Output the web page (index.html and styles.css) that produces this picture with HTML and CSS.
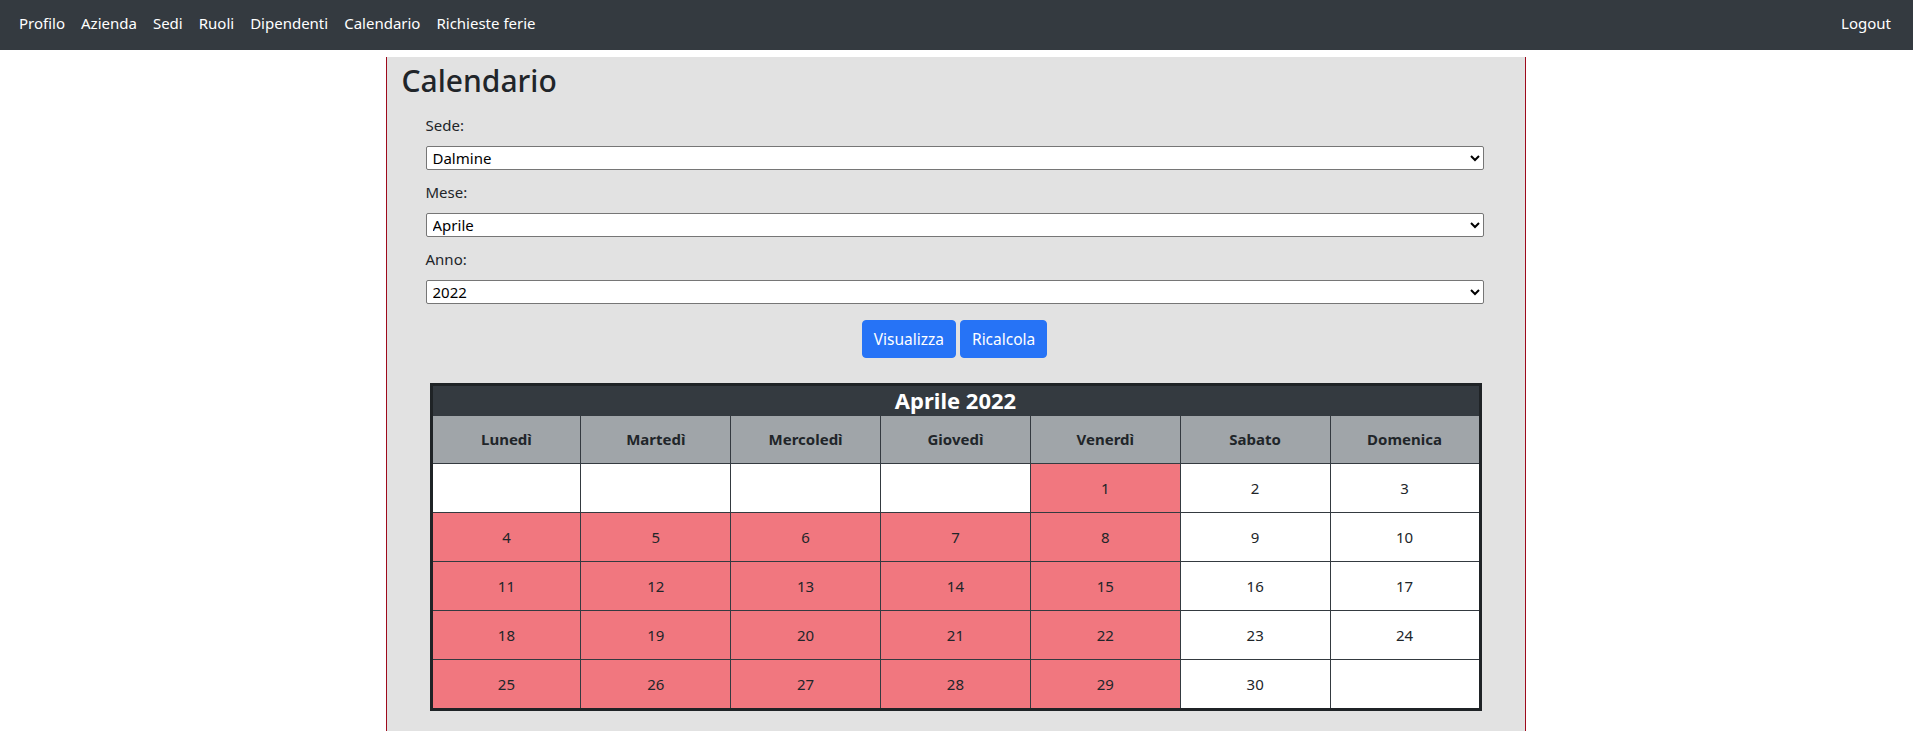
FILE: index.html
```html
<!DOCTYPE html>
<html lang="it">
<head>
<meta charset="utf-8">
<title>Calendario</title>
<link rel="stylesheet" href="styles.css">
</head>
<body>
<nav class="navbar">
  <ul class="nav-left">
    <li><a href="#">Profilo</a></li>
    <li><a href="#">Azienda</a></li>
    <li><a href="#">Sedi</a></li>
    <li><a href="#">Ruoli</a></li>
    <li><a href="#">Dipendenti</a></li>
    <li><a href="#">Calendario</a></li>
    <li><a href="#">Richieste ferie</a></li>
  </ul>
  <a class="logout" href="#">Logout</a>
</nav>
<main class="container">
  <h2 class="title">Calendario</h2>
  <form class="filters">
    <label class="lbl" for="sede">Sede:</label>
    <select id="sede" class="sel"><option>Dalmine</option></select>
    <label class="lbl" for="mese">Mese:</label>
    <select id="mese" class="sel"><option>Aprile</option></select>
    <label class="lbl" for="anno">Anno:</label>
    <select id="anno" class="sel"><option>2022</option></select>
    <div class="actions">
      <button type="button" class="btn">Visualizza</button>
      <button type="button" class="btn">Ricalcola</button>
    </div>
  </form>
  <table class="cal">
    <thead>
      <tr><th colspan="7" class="cal-title">Aprile 2022</th></tr>
      <tr class="days">
        <th>Lunedì</th><th>Martedì</th><th>Mercoledì</th><th>Giovedì</th><th>Venerdì</th><th>Sabato</th><th>Domenica</th>
      </tr>
    </thead>
    <tbody>
      <tr><td></td><td></td><td></td><td></td><td class="off">1</td><td>2</td><td>3</td></tr>
      <tr><td class="off">4</td><td class="off">5</td><td class="off">6</td><td class="off">7</td><td class="off">8</td><td>9</td><td>10</td></tr>
      <tr><td class="off">11</td><td class="off">12</td><td class="off">13</td><td class="off">14</td><td class="off">15</td><td>16</td><td>17</td></tr>
      <tr><td class="off">18</td><td class="off">19</td><td class="off">20</td><td class="off">21</td><td class="off">22</td><td>23</td><td>24</td></tr>
      <tr><td class="off">25</td><td class="off">26</td><td class="off">27</td><td class="off">28</td><td class="off">29</td><td>30</td><td></td></tr>
    </tbody>
  </table>
</main>
</body>
</html>
```
FILE: styles.css
```css
* { box-sizing: border-box; }
html, body { margin: 0; padding: 0; }
body {
  font-family: "Noto Sans", "Open Sans", sans-serif;
  font-size: 15px;
  color: #212529;
  background: #fff;
  line-height: 1.5;
}
.navbar {
  height: 50px;
  background: #343a40;
  display: flex;
  align-items: center;
  justify-content: space-between;
  padding: 0 22px 3px 11px;
}
.nav-left {
  display: flex;
  list-style: none;
  margin: 0;
  padding: 0;
}
.nav-left a, .logout {
  color: #fff;
  text-decoration: none;
  display: block;
  padding: 0 8px;
  font-size: 15px;
}
.logout { padding: 0; }
.container {
  width: 1140px;
  margin: 7px 0 0 calc(50% - 571px);
  background: #e2e2e2;
  border-left: 1px solid #9e0a1c;
  border-right: 1px solid #9e0a1c;
  padding: 0 0 24px;
}
.title {
  margin: 0;
  padding: 5px 0 0 15px;
  font-size: 30px;
  font-weight: 500;
  line-height: 38px;
}
.filters {
  display: flex;
  flex-direction: column;
  padding: 0 41px 0 39px;
}
.lbl {
  display: block;
  line-height: 24px;
  margin: 10px 0 9px;
}
.filters .lbl:first-child { margin-top: 13px; }
.sel {
  height: 24px;
  font-family: inherit;
  font-size: 15px;
  border: 1px solid #767676;
  border-radius: 2px;
  background: #fff;
  color: #000;
  padding: 0 2px;
}
.actions {
  display: flex;
  justify-content: center;
  gap: 4px;
  margin-top: 16px;
}
.btn {
  font-family: inherit;
  font-size: 15.5px;
  line-height: 24px;
  height: 38px;
  padding: 6px 11px;
  color: #fff;
  background: #2673f6;
  border: 1px solid #2673f6;
  border-radius: 4px;
}
.cal {
  width: 1052px;
  margin: 25px auto 0;
  border-collapse: collapse;
  border: 3px solid #1f2326;
  background: #fff;
}
.cal th, .cal td {
  border: 1px solid #343a40;
  text-align: center;
  width: 14.2857%;
}
.cal .cal-title {
  background: #343a40;
  color: #fff;
  font-size: 22px;
  font-weight: 700;
  line-height: 29px;
  padding: 0;
  border-bottom: 0;
}
.days th {
  background: #a0a5a9;
  font-weight: 700;
  font-size: 15px;
  line-height: 23px;
  padding: 12px 0;
}
.cal td {
  line-height: 24px;
  padding: 12px 0;
  font-size: 15px;
  color: #212529;
}
.cal td.off { background: #f1777f; }
```
